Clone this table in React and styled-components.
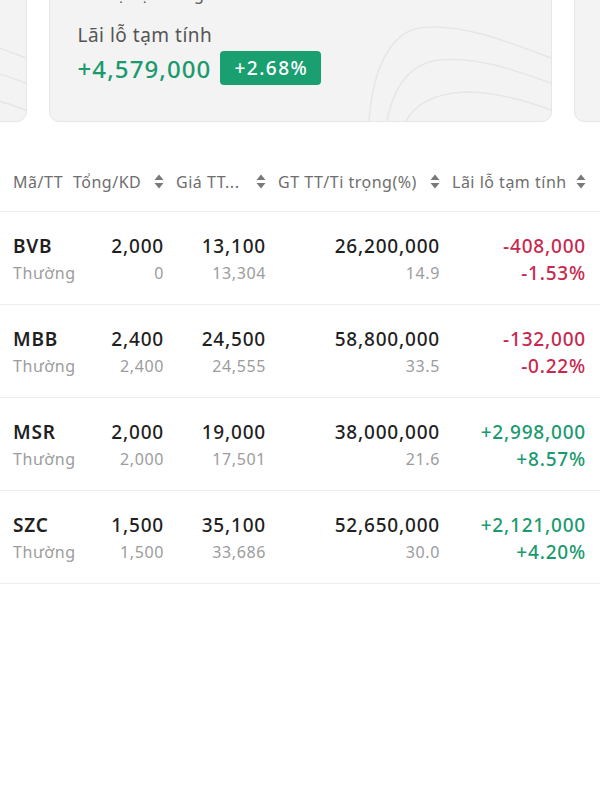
import React from "react";
import styled, { createGlobalStyle } from "styled-components";

const GlobalStyle = createGlobalStyle`
  body {
    margin: 0;
    background: #ffffff;
    font-family: "Noto Sans", "Open Sans", sans-serif;
    color: #1f1f1f;
  }
  * { box-sizing: border-box; }
`;

const Page = styled.div`
  width: 600px;
  height: 800px;
  overflow: hidden;
  background: #ffffff;
`;

const Carousel = styled.div`
  display: flex;
  justify-content: center;
  gap: 22px;
  margin-top: -40px;
  overflow: hidden;
`;

const Card = styled.div`
  position: relative;
  flex: 0 0 503px;
  height: 162px;
  background: #f3f3f3;
  border: 1px solid #e6e6e6;
  border-radius: 10px;
  padding: 22px 28px 0 28px;
  overflow: hidden;
`;

const Deco = styled.svg`
  position: absolute;
  right: 0;
  bottom: 0;
  width: 202px;
  height: 101px;
`;

const TopLabel = styled.div`
  font-size: 16px;
  color: #5a5a5a;
  line-height: 22px;
  margin-bottom: 18px;
`;

const Label = styled.div`
  position: relative;
  font-size: 19px;
  letter-spacing: 0.5px;
  color: #555555;
  line-height: 24px;
`;

const ValueRow = styled.div`
  position: relative;
  display: flex;
  align-items: center;
  gap: 9px;
  margin-top: 4px;
`;

const BigValue = styled.span`
  font-size: 24px;
  font-weight: 500;
  color: #1a9a6e;
  letter-spacing: 1.1px;
`;

const Badge = styled.span`
  background: #1aa070;
  color: #ffffff;
  font-size: 19px;
  font-weight: 500;
  letter-spacing: 1.5px;
  border-radius: 4px;
  padding: 5px 13px 5px 14px;
  line-height: 24px;
`;

const cols = "48px 91px 90px 162px 134px";

const HeaderRow = styled.div`
  display: grid;
  grid-template-columns: ${cols};
  column-gap: 12px;
  padding: 0 14px 0 13px;
  height: 90px;
  align-items: center;
  border-bottom: 1px solid #ececec;
  font-size: 16px;
  letter-spacing: 0.5px;
  color: #6e6e6e;
`;

const HeadCell = styled.div`
  display: flex;
  align-items: center;
  justify-content: space-between;
  white-space: nowrap;
  margin-top: 30px;
`;

const SortIcon = () => (
  <svg width="10" height="15" viewBox="0 0 10 15">
    <path d="M5 0.5 L9.5 6 L0.5 6 Z" fill="#7a7a7a" />
    <path d="M5 14.5 L9.5 9 L0.5 9 Z" fill="#7a7a7a" />
  </svg>
);

const Row = styled.div`
  display: grid;
  grid-template-columns: ${cols};
  column-gap: 12px;
  padding: 3px 14px 0 13px;
  height: 93px;
  align-items: center;
  border-bottom: 1px solid #ececec;
`;

const Cell = styled.div`
  display: flex;
  flex-direction: column;
  align-items: ${(p) => (p.left ? "flex-start" : "flex-end")};
  gap: 4px;
  white-space: nowrap;
`;

const toneColor = (tone, base) =>
  tone === "up" ? "#1a9a6e" : tone === "down" ? "#c8284f" : base;

const Main = styled.span`
  font-size: 19px;
  line-height: 23px;
  letter-spacing: 0.8px;
  font-weight: ${(p) => (p.bold ? 600 : 500)};
  color: ${(p) => toneColor(p.tone, "#1f1f1f")};
`;

const Sub = styled.span`
  line-height: 23px;
  color: ${(p) => toneColor(p.tone, "#9c9c9c")};
  font-size: ${(p) => (p.tone ? "19px" : "16px")};
  letter-spacing: ${(p) => (p.tone ? "0.8px" : "0.6px")};
  font-weight: ${(p) => (p.tone ? 500 : 400)};
`;

const rows = [
  { s: "BVB", t: "2,000", kd: "0", p: "13,100", avg: "13,304", v: "26,200,000", w: "14.9", pl: "-408,000", pct: "-1.53%", tone: "down" },
  { s: "MBB", t: "2,400", kd: "2,400", p: "24,500", avg: "24,555", v: "58,800,000", w: "33.5", pl: "-132,000", pct: "-0.22%", tone: "down" },
  { s: "MSR", t: "2,000", kd: "2,000", p: "19,000", avg: "17,501", v: "38,000,000", w: "21.6", pl: "+2,998,000", pct: "+8.57%", tone: "up" },
  { s: "SZC", t: "1,500", kd: "1,500", p: "35,100", avg: "33,686", v: "52,650,000", w: "30.0", pl: "+2,121,000", pct: "+4.20%", tone: "up" },
];

const Contours = () => (
  <Deco viewBox="0 0 202 101" fill="none">
    <path d="M20 101 C24 50, 40 14, 70 8 C110 2, 160 22, 202 38" stroke="#e6e6e6" strokeWidth="1.5" />
    <path d="M38 101 C44 70, 58 44, 90 40 C130 36, 170 52, 202 63" stroke="#e6e6e6" strokeWidth="1.5" />
    <path d="M57 101 C66 84, 84 74, 115 72 C150 72, 180 82, 202 90" stroke="#e6e6e6" strokeWidth="1.5" />
  </Deco>
);

export default function App() {
  return (
    <Page>
      <GlobalStyle />
      <Carousel>
        <Card>
          <Contours />
        </Card>
        <Card>
          <Contours />
          <TopLabel>Giá trị thị trường</TopLabel>
          <Label>Lãi lỗ tạm tính</Label>
          <ValueRow>
            <BigValue>+4,579,000</BigValue>
            <Badge>+2.68%</Badge>
          </ValueRow>
        </Card>
        <Card>
          <Contours />
        </Card>
      </Carousel>
      <HeaderRow>
        <HeadCell>Mã/TT</HeadCell>
        <HeadCell>Tổng/KD <SortIcon /></HeadCell>
        <HeadCell>Giá TT... <SortIcon /></HeadCell>
        <HeadCell>GT TT/Ti trọng(%) <SortIcon /></HeadCell>
        <HeadCell>Lãi lỗ tạm tính <SortIcon /></HeadCell>
      </HeaderRow>
      {rows.map((r) => (
        <Row key={r.s}>
          <Cell left>
            <Main bold>{r.s}</Main>
            <Sub>Thường</Sub>
          </Cell>
          <Cell>
            <Main>{r.t}</Main>
            <Sub>{r.kd}</Sub>
          </Cell>
          <Cell>
            <Main>{r.p}</Main>
            <Sub>{r.avg}</Sub>
          </Cell>
          <Cell>
            <Main>{r.v}</Main>
            <Sub>{r.w}</Sub>
          </Cell>
          <Cell>
            <Main tone={r.tone}>{r.pl}</Main>
            <Sub tone={r.tone}>{r.pct}</Sub>
          </Cell>
        </Row>
      ))}
    </Page>
  );
}
